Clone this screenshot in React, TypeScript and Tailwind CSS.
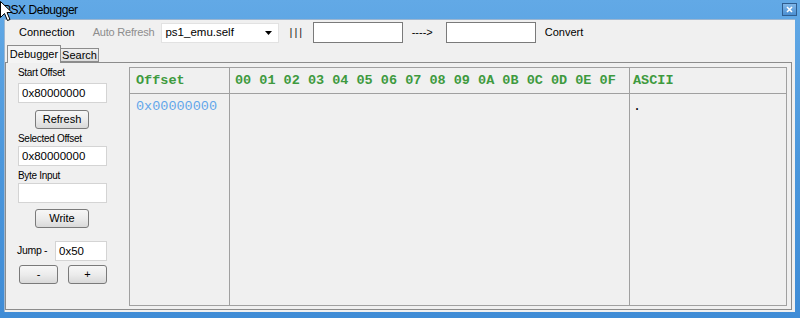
const Label = ({ text }: { text: string }) => (
  <div className="ml-[12px] h-[12px] text-[10px] leading-[12px] tracking-[-0.3px] text-black">
    {text}
  </div>
);

const TextBox = ({ value, className }: { value?: string; className: string }) => (
  <div
    className={`h-[20px] bg-white border border-[#d4d4d4] text-[11.5px] leading-[18px] pl-[3px] text-black ${className}`}
  >
    {value}
  </div>
);

const Button = ({ text, className }: { text: string; className: string }) => (
  <div
    className={`h-[19px] rounded-[3px] border border-[#7a7a7a] bg-gradient-to-b from-[#f7f7f7] via-[#ececec] to-[#d9d9d9] text-[11px] leading-[17px] text-center text-black ${className}`}
  >
    {text}
  </div>
);

const hexHeader = [
  "00", "01", "02", "03", "04", "05", "06", "07",
  "08", "09", "0A", "0B", "0C", "0D", "0E", "0F",
].join(" ");

const App = () => {
  return (
    <div className="relative w-[800px] h-[318px] overflow-hidden bg-gradient-to-b from-[#62a9e6] via-[#4b97dc] to-[#3f8cd6] font-['Liberation_Sans',Arial,sans-serif] antialiased">
      {/* title bar */}
      <div className="h-[19px] pl-[3px] flex items-center text-[12px] tracking-[-0.45px] text-black">
        PSX Debugger
      </div>
      <div className="absolute right-[3px] top-[3px] w-[15px] h-[13px] border border-[#2f5d8f] bg-gradient-to-b from-[#7fb6e8] to-[#4a8fd2] flex items-center justify-center">
        <svg width="7" height="7" viewBox="0 0 7 7">
          <path d="M1 1 L6 6 M6 1 L1 6" stroke="#ffffff" strokeWidth="1.6" />
        </svg>
      </div>

      {/* client area */}
      <div className="ml-[4px] w-[791px] h-[293px] bg-[#f0f0f0] border-t border-l border-[#9cb6d1] flex flex-col">
        {/* toolbar */}
        <div className="h-[25px] flex items-center text-[11px] text-black">
          <span className="ml-[14px]">Connection</span>
          <span className="ml-[18px] text-[#8d8d8d] tracking-[-0.2px]">Auto Refresh</span>
          <div className="ml-[7px] w-[118px] h-[20px] bg-white border border-[#e2e2e2] flex items-center pl-[3px] text-[11.5px]">
            <span className="flex-1">ps1_emu.self</span>
            <svg width="7" height="4" viewBox="0 0 7 4" className="mr-[6px]">
              <path d="M0 0 L7 0 L3.5 4 Z" fill="#000" />
            </svg>
          </div>
          <span className="ml-[10px] text-[#222222] whitespace-pre tracking-[-0.5px]">| | |</span>
          <div className="ml-[11px] w-[90px] h-[21px] bg-white border border-[#7a7a7a]" />
          <span className="ml-[9px]">----&gt;</span>
          <div className="ml-[13px] w-[90px] h-[21px] bg-white border border-[#7a7a7a]" />
          <span className="ml-[9px]">Convert</span>
        </div>

        {/* tabs */}
        <div className="h-[17px] flex items-end pl-[2px] text-[11px] text-black">
          <div className="relative z-10 h-[18px] w-[54px] -mb-[1px] border border-b-0 border-[#8c8c8c] bg-[#f4f4f4] text-center leading-[17px]">
            Debugger
          </div>
          <div className="h-[14px] w-[38px] border border-l-0 border-[#8c8c8c] bg-gradient-to-b from-[#f0f0f0] to-[#dcdcdc] text-center leading-[13px]">
            Search
          </div>
        </div>

        {/* tab panel */}
        <div className="w-[787px] h-[248px] border border-[#8c8c8c] bg-[#f0f0f0] flex pt-[4px] pb-[3px]">
          {/* left controls */}
          <div className="w-[123px] flex flex-col">
            <Label text="Start Offset" />
            <TextBox value="0x80000000" className="ml-[12px] w-[89px] mt-[4px]" />
            <Button text="Refresh" className="ml-[29px] w-[54px] mt-[7px]" />
            <div className="mt-[4px]" />
            <Label text="Selected Offset" />
            <TextBox value="0x80000000" className="ml-[12px] w-[89px] mt-[1px]" />
            <div className="mt-[4px]" />
            <Label text="Byte Input" />
            <TextBox className="ml-[12px] w-[89px] mt-[1px]" />
            <Button text="Write" className="ml-[29px] w-[54px] mt-[6px]" />
            <div className="mt-[13px] flex items-center">
              <span className="ml-[11px] w-[38px] text-[10.5px] tracking-[-0.3px]">Jump -</span>
              <TextBox value="0x50" className="w-[52px]" />
            </div>
            <div className="mt-[4px] flex">
              <Button text="-" className="ml-[13px] w-[39px]" />
              <Button text="+" className="ml-[10px] w-[39px]" />
            </div>
          </div>

          {/* hex grid */}
          <div className="w-[658px] h-[239px] border border-[#a0a0a0] bg-[#f0f0f0] flex font-['Liberation_Mono','Courier_New',monospace] text-[13.5px]">
            <div className="w-[99px] flex flex-col">
              <div className="h-[26px] border-b border-[#a0a0a0] pl-[6px] leading-[25px] font-bold text-[#3e9a3e]">
                Offset
              </div>
              <div className="pl-[6px] pt-[5px] leading-[16px] text-[#62a6ea]">0x00000000</div>
            </div>
            <div className="w-[400px] flex flex-col border-l border-[#a0a0a0]">
              <div className="h-[26px] border-b border-[#a0a0a0] pl-[5px] leading-[25px] font-bold text-[#3e9a3e] whitespace-pre">
                {hexHeader}
              </div>
            </div>
            <div className="flex-1 flex flex-col border-l border-[#a0a0a0]">
              <div className="h-[26px] border-b border-[#a0a0a0] pl-[3px] leading-[25px] font-bold text-[#3e9a3e]">
                ASCII
              </div>
              <div className="pl-[3px] pt-[5px] leading-[16px] text-black">.</div>
            </div>
          </div>
        </div>
      </div>

      {/* mouse pointer */}
      <svg
        width="13"
        height="21"
        viewBox="0 0 13 21"
        className="absolute left-0 top-[1px]"
      >
        <path
          d="M0.5 0.5 L0.5 16.5 L4.5 12.5 L7.5 19.5 L10 18.5 L7 11.5 L12 11.5 Z"
          fill="#ffffff"
          stroke="#000000"
          strokeWidth="1"
          strokeLinejoin="round"
        />
      </svg>
    </div>
  );
};

export default App;
